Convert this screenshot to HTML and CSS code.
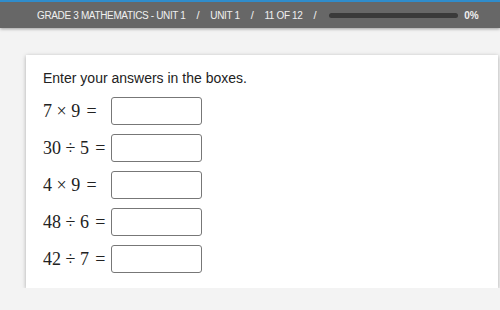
FILE: index.html
```html
<!DOCTYPE html>
<html>
<head>
    <title>Grade 3 Mathematics - Unit 1</title>
    <link rel="stylesheet" href="styles.css">
</head>
<body>
    <div class="topbar">
        <span class="crumb">GRADE 3 MATHEMATICS - UNIT 1</span>
        <span class="sep">/</span>
        <span class="crumb">UNIT 1</span>
        <span class="sep">/</span>
        <span class="crumb">11 OF 12</span>
        <span class="sep">/</span>
        <div class="progress"><div class="progress-fill" style="width: 0%"></div></div>
        <span class="percent">0%</span>
    </div>

    <div class="card">
        <p class="prompt">Enter your answers in the boxes.</p>
        <div class="problems">
            <span class="math">7<span class="bin">×</span>9<span class="rel">=</span></span>
            <input class="answer" type="text">
            <span class="math">30<span class="bin">÷</span>5<span class="rel">=</span></span>
            <input class="answer" type="text">
            <span class="math">4<span class="bin">×</span>9<span class="rel">=</span></span>
            <input class="answer" type="text">
            <span class="math">48<span class="bin">÷</span>6<span class="rel">=</span></span>
            <input class="answer" type="text">
            <span class="math">42<span class="bin">÷</span>7<span class="rel">=</span></span>
            <input class="answer" type="text">
        </div>
    </div>
</body>
</html>
```

FILE: styles.css
```css
body {
    margin: 0;
    font-family: "Liberation Sans", Arial, sans-serif;
    background-color: #f3f3f3;
}
.topbar {
    display: flex;
    align-items: center;
    gap: 10px;
    height: 26px;
    padding-left: 37px;
    background-color: #676767;
    border-top: 2px solid #2f8ccb;
    box-shadow: 0px 1px 3px rgba(0, 0, 0, 0.35);
    color: #f0f0f0;
    font-size: 10px;
    letter-spacing: -0.35px;
}
.sep {
    font-size: 11px;
    margin: 0 1px;
}
.progress {
    width: 129px;
    height: 5px;
    margin-left: 2px;
    border-radius: 3px;
    background-color: #3a3a3a;
}
.progress-fill {
    height: 100%;
    border-radius: 3px;
    background-color: #2f8ccb;
}
.percent {
    margin-left: -4px;
    font-size: 10px;
    font-weight: bold;
    letter-spacing: 0;
}
.card {
    margin: 27px 2px 0 26px;
    padding: 15px 17px 16px 17px;
    height: 202px;
    background: white;
    box-shadow: 0px 1px 4px rgba(0, 0, 0, 0.3);
}
.prompt {
    margin: 0 0 11px 0;
    font-size: 14px;
    color: #222;
}
.problems {
    display: grid;
    grid-template-columns: 68px 91px;
    row-gap: 9px;
    align-items: center;
}
.math {
    font-family: "Liberation Serif", "Times New Roman", serif;
    font-size: 18px;
    color: #222;
    white-space: nowrap;
}
.bin {
    margin: 0 0.25em;
}
.rel {
    margin-left: 0.35em;
}
.answer {
    box-sizing: border-box;
    width: 91px;
    height: 28px;
    margin: 0;
    border: 1px solid #777;
    border-radius: 3px;
    background: white;
}
```
